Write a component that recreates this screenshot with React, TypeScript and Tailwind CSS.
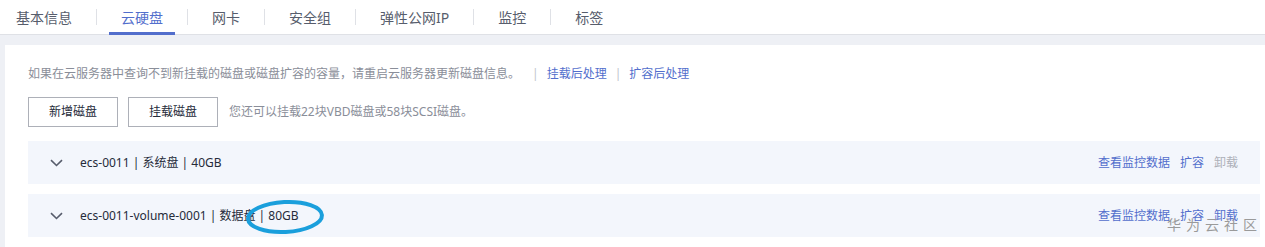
const tabs = ['基本信息', '云硬盘', '网卡', '安全组', '弹性公网IP', '监控', '标签']

function Chevron() {
  return (
    <svg width="13" height="8" viewBox="0 0 13 8" className="shrink-0">
      <path d="M1 1.2 L6.5 6.5 L12 1.2" fill="none" stroke="#575d6c" strokeWidth="1.6" />
    </svg>
  )
}

function DiskRow({ label, canDetach }: { label: string; canDetach: boolean }) {
  return (
    <div className="flex h-[43px] items-center bg-[#f3f6fc] pl-[22px] pr-[22px] text-[12px]">
      <Chevron />
      <span className="ml-[17px] text-[#252b3a]">{label}</span>
      <div className="ml-auto flex gap-[10px]">
        <span className="text-[#526ecc]">查看监控数据</span>
        <span className="text-[#526ecc]">扩容</span>
        <span className={canDetach ? 'text-[#526ecc]' : 'text-[#adb0b8]'}>卸载</span>
      </div>
    </div>
  )
}

export default function App() {
  return (
    <div
      className="relative h-[247px] w-[1265px] overflow-hidden bg-white"
      style={{ fontFamily: '"Noto Sans", "Noto Sans CJK SC", sans-serif' }}
    >
      {/* tabs */}
      <div className="flex h-[35px] items-stretch border-b border-[#dfe1e6] pl-[4px] text-[14px] text-[#575d6c]">
        {tabs.map((t, i) => (
          <div key={t} className="flex items-stretch">
            {i > 0 && <div className="mx-3 my-[9px] w-px bg-[#dfe1e6]" />}
            <div className="relative flex items-center px-3">
              <span className={i === 1 ? 'text-[#526ecc]' : ''}>{t}</span>
              {i === 1 && <div className="absolute inset-x-0 bottom-[-1px] h-[3px] bg-[#526ecc]" />}
            </div>
          </div>
        ))}
      </div>

      {/* body */}
      <div className="bg-[#eef0f5] pl-[5px] pt-[10px]">
        <div className="h-[202px] bg-white pl-[23px] pr-[5px] pt-[21px]">
          <div className="flex items-center text-[12px] leading-[16px] text-[#8a8e99]">
            <span>如果在云服务器中查询不到新挂载的磁盘或磁盘扩容的容量，请重启云服务器更新磁盘信息。</span>
            <span className="ml-[12px] mr-[8px] text-[#c0c4cc]">|</span>
            <span className="text-[#526ecc]">挂载后处理</span>
            <span className="mx-[8px] text-[#c0c4cc]">|</span>
            <span className="text-[#526ecc]">扩容后处理</span>
          </div>

          <div className="mt-[15px] flex items-center gap-[10px] text-[12px]">
            <button className="h-[30px] w-[90px] border border-[#adb0b8] bg-white text-[#252b3a]">新增磁盘</button>
            <button className="h-[30px] w-[90px] border border-[#adb0b8] bg-white text-[#252b3a]">挂载磁盘</button>
            <span className="ml-px text-[#8a8e99]">您还可以挂载22块VBD磁盘或58块SCSI磁盘。</span>
          </div>

          <div className="mt-[14px] flex flex-col gap-[10px]">
            <DiskRow label="ecs-0011 | 系统盘 | 40GB" canDetach={false} />
            <DiskRow label="ecs-0011-volume-0001 | 数据盘 | 80GB" canDetach={true} />
          </div>
        </div>
      </div>

      {/* hand-drawn annotation */}
      <svg className="absolute left-[244px] top-[197px]" width="82" height="40" viewBox="0 0 82 40">
        <ellipse cx="41" cy="20" rx="37" ry="15" fill="none" stroke="#1a9fdc" strokeWidth="4" transform="rotate(-3 41 20)" />
      </svg>

      {/* watermark */}
      <div className="absolute left-[1167px] top-[214px] text-[14px] tracking-[5px] text-[#9a9a9a]">华为云社区</div>
    </div>
  )
}
